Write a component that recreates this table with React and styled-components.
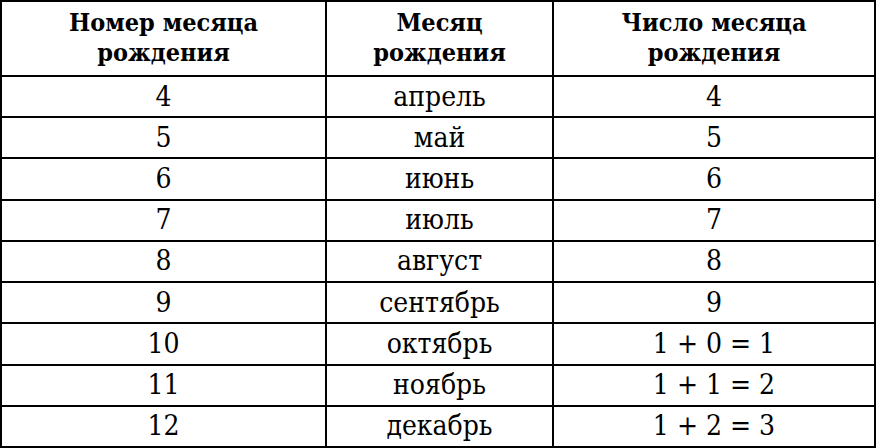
import React from 'react';
import styled, { createGlobalStyle } from 'styled-components';

const rows = [
  ['4', 'апрель', '4'],
  ['5', 'май', '5'],
  ['6', 'июнь', '6'],
  ['7', 'июль', '7'],
  ['8', 'август', '8'],
  ['9', 'сентябрь', '9'],
  ['10', 'октябрь', '1 + 0 = 1'],
  ['11', 'ноябрь', '1 + 1 = 2'],
  ['12', 'декабрь', '1 + 2 = 3'],
];

function App() {
  return (
    <>
      <GlobalStyle />
      <Table>
        <colgroup>
          <col style={{ width: 325 }} />
          <col style={{ width: 227 }} />
          <col />
        </colgroup>
        <thead>
          <tr>
            <HeadCell>Номер месяца<br />рождения</HeadCell>
            <HeadCell>Месяц<br />рождения</HeadCell>
            <HeadCell>Число месяца<br />рождения</HeadCell>
          </tr>
        </thead>
        <tbody>
          {rows.map((r) => (
            <tr key={r[0]}>
              {r.map((v, i) => (
                <Cell key={i}>{v}</Cell>
              ))}
            </tr>
          ))}
        </tbody>
      </Table>
    </>
  );
}

const GlobalStyle = createGlobalStyle`
  html, body {
    margin: 0;
    padding: 0;
    background: #fff;
  }
`;

const Table = styled.table`
  width: 876px;
  height: 448px;
  border-collapse: collapse;
  table-layout: fixed;
  font-family: "DejaVu Serif Condensed", "DejaVu Serif", "Liberation Serif", serif;
  color: #000;
`;

const HeadCell = styled.th`
  height: 71px;
  border: 2.5px solid #000;
  font-size: 25px;
  font-weight: bold;
  line-height: 30px;
  text-align: center;
  vertical-align: middle;
  padding: 0 0 2px;
`;

const Cell = styled.td`
  height: 39px;
  border: 2.5px solid #000;
  font-size: 28px;
  line-height: 30px;
  text-align: center;
  vertical-align: middle;
  padding: 0;
`;

export default App;
